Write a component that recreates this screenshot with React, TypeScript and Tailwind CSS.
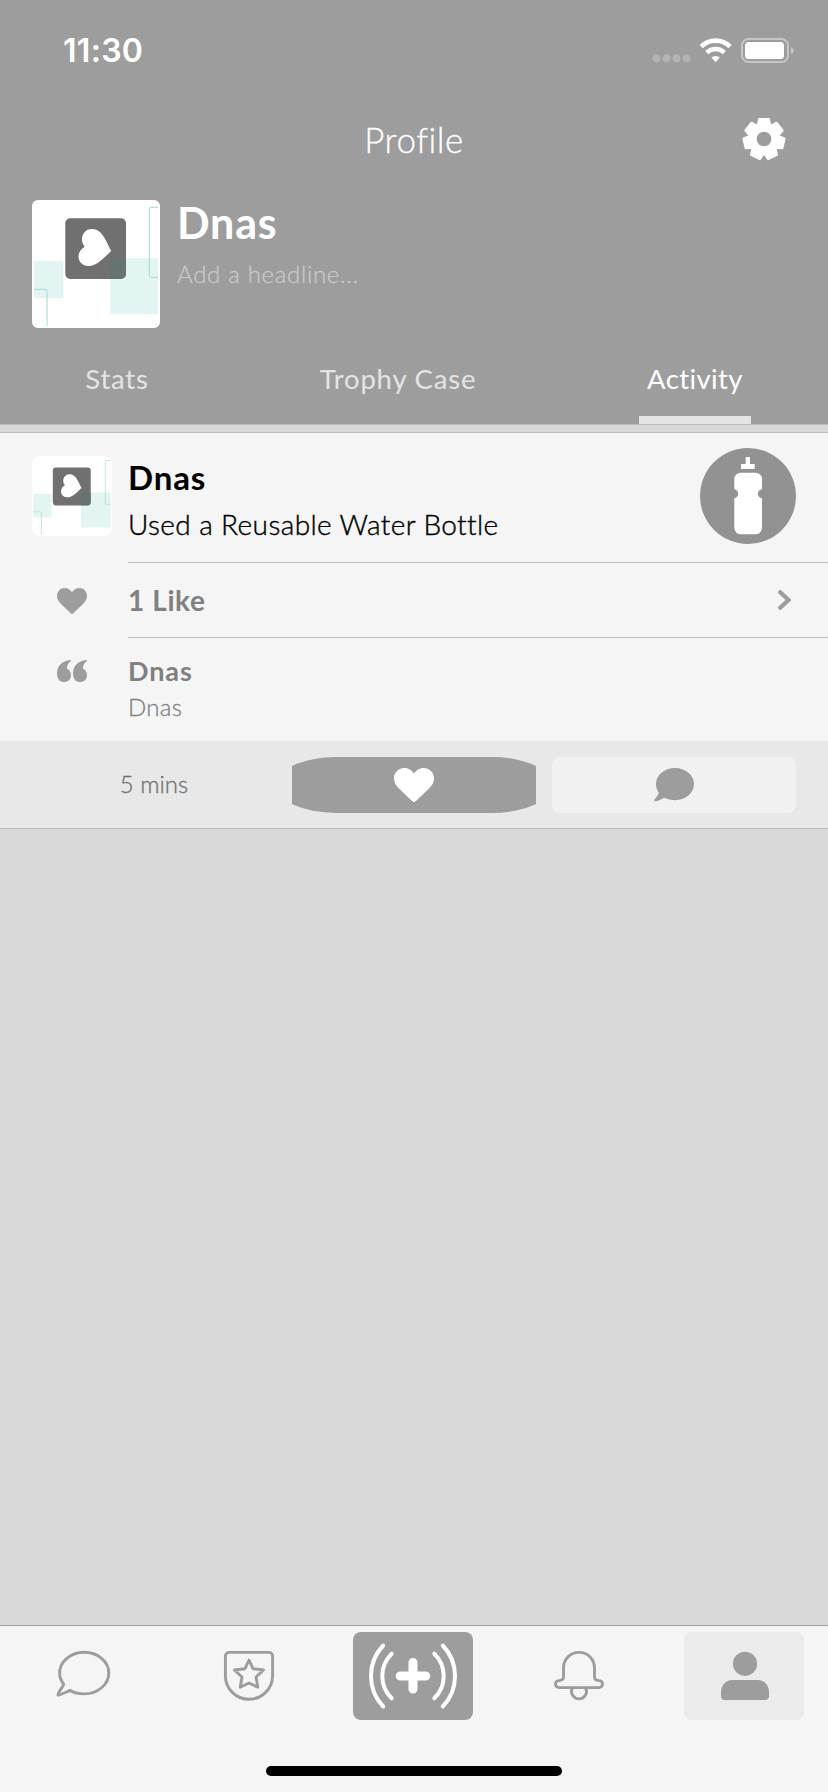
import type { ReactNode } from "react";

function Gear() {
  const teeth = [0, 1, 2, 3, 4, 5, 6];
  return (
    <svg width="44" height="44" viewBox="-22 -22 44 44">
      <g fill="#fff" stroke="#fff" strokeWidth="2.4" strokeLinejoin="round">
        {teeth.map((i) => (
          <path
            key={i}
            d="M-4.8 -19.8h9.6l1 5.5h-11.6z"
            transform={`rotate(${(i * 360) / 7})`}
          />
        ))}
      </g>
      <circle r="16.2" fill="#fff" />
      <circle r="7.3" fill="#9d9d9d" />
    </svg>
  );
}

function Avatar({ className }: { className: string }) {
  return (
    <svg viewBox="0 0 128 128" className={className}>
      <rect width="128" height="128" fill="#fff" />
      <rect x="33.3" y="18.3" width="60.7" height="60.7" rx="5" fill="#707070" />
      <rect x="2" y="60.7" width="29.3" height="37.6" fill="#e3f5f2" />
      <path d="M94 58.3H126V114.3H78.3V79H89a5 5 0 0 0 5-5z" fill="#e3f5f2" />
      <path d="M78.3 58.3H94V74a5 5 0 0 1-5 5H78.3z" fill="#667370" />
      <path
        d="M52.7 46.7C47 40 50.5 29 60 29C70 29 73.5 40 79.3 51C72 57.5 65 66 56.7 66C45.5 66 42.5 52.5 52.7 46.7Z"
        fill="#fff"
      />
      <path
        d="M126 7.3h-6.7a2 2 0 0 0-2 2v66a2 2 0 0 0 2 2h6.7M2 89.3h11a2 2 0 0 1 2 2V126"
        fill="none"
        stroke="#9fdccf"
        strokeWidth="1"
      />
    </svg>
  );
}

function Heart({ className }: { className: string }) {
  return (
    <svg viewBox="0 0 40 34" preserveAspectRatio="none" className={className}>
      <path
        fill="currentColor"
        d="M20 34C19.2 34 18.4 33.2 17.5 32.4L5 20.5C2 17.5 0 14.5 0 10.5C0 4.5 4.6 0 10.3 0C14.6 0 18 2.3 20 5.6C22 2.3 25.4 0 29.7 0C35.4 0 40 4.5 40 10.5C40 14.5 38 17.5 35 20.5L22.5 32.4C21.6 33.2 20.8 34 20 34Z"
      />
    </svg>
  );
}

function Bottle() {
  return (
    <svg width="96" height="96" viewBox="0 0 96 96">
      <circle cx="48" cy="48" r="48" fill="#929292" />
      <path d="M45.7 9H50v7h4.7v5H41v-5h4.7z" fill="#fff" />
      <rect x="34.3" y="24.7" width="27.7" height="61.6" rx="6.5" fill="#fff" />
      <circle cx="33.7" cy="45.7" r="4.5" fill="#929292" />
      <circle cx="62.4" cy="45.7" r="4.5" fill="#929292" />
    </svg>
  );
}

function Quote() {
  return (
    <svg width="30" height="22" viewBox="0 0 30 22" fill="#9d9d9d">
      <path d="M14 0C7 .3 0 4.5 0 13.2C0 18.6 3 22 7 22C11 22 14 19 14 15.4C14 11.8 12.4 9.6 9.8 8.8C10 5 11.5 2.3 14 .9Z" />
      <path
        transform="translate(16)"
        d="M14 0C7 .3 0 4.5 0 13.2C0 18.6 3 22 7 22C11 22 14 19 14 15.4C14 11.8 12.4 9.6 9.8 8.8C10 5 11.5 2.3 14 .9Z"
      />
    </svg>
  );
}

function StatusBar() {
  return (
    <div className="flex h-[99px] items-center justify-between pl-[63px] pr-[34px]">
      <span className="pt-0.5 font-[Inter,sans-serif] text-[32px] font-semibold leading-none tracking-[0.3px]">
        11:30
      </span>
      <svg width="142" height="26" viewBox="652 36 142 26">
        <g fill="#b4b4b4">
          <circle cx="656.5" cy="57.3" r="3.9" />
          <circle cx="666.5" cy="57.3" r="3.9" />
          <circle cx="676.5" cy="57.3" r="3.9" />
          <circle cx="686.7" cy="57.3" r="3.9" />
        </g>
        <g fill="none" stroke="#fff" strokeWidth="4.6">
          <path d="M701.2 45.6a20.3 20.3 0 0 1 28.8 0" />
          <path d="M706.8 51.7a12.4 12.4 0 0 1 17.6 0" />
        </g>
        <path d="M711.4 56.6a6 6 0 0 1 8.4 0L715.6 61.2z" fill="#fff" />
        <rect x="742" y="38" width="46" height="23" rx="6.5" fill="none" stroke="#c6c6c6" strokeWidth="2" />
        <rect x="745" y="41" width="39" height="17" rx="3.5" fill="#fff" />
        <path d="M791 46q2.8 1.2 2.8 3.6t-2.8 3.6z" fill="#c6c6c6" />
      </svg>
    </div>
  );
}

function Header() {
  return (
    <header className="h-[424px] bg-[#9d9d9d] text-white">
      <StatusBar />
      <div className="grid h-20 grid-cols-3 items-center px-[42px]">
        <span />
        <h1 className="text-center text-[35px] font-light leading-none tracking-[0.5px] [-webkit-text-stroke:0.3px]">
          Profile
        </h1>
        <button className="justify-self-end">
          <Gear />
        </button>
      </div>
      <div className="flex gap-[17px] px-8 pt-[21px]">
        <Avatar className="size-32 rounded-[6px]" />
        <div className="pt-px">
          <h2 className="text-[43px] font-bold leading-[43px] tracking-[0.8px]">Dnas</h2>
          <p className="mt-[14px] text-2xl font-light leading-8 tracking-[0.68px] text-[#c9c9c9] [-webkit-text-stroke:0.3px]">
            Add a headline...
          </p>
        </div>
      </div>
      <nav className="flex h-24 justify-between px-[77px] text-[27.5px] leading-[102px] tracking-[0.8px] text-[#e4e4e4]">
        <button className="w-20 text-center">Stats</button>
        <button className="w-[172px] text-center">Trophy Case</button>
        <button className="w-28 border-b-8 border-[#e4e4e4] text-center tracking-[0.4px] text-white">Activity</button>
      </nav>
    </header>
  );
}

function ActivityCard() {
  return (
    <article className="border-y border-[#bdbdbd] bg-[#f5f5f5]">
      <div className="flex">
        <div className="w-32 pl-8 pt-[23px]">
          <Avatar className="size-20 rounded-lg" />
        </div>
        <div className="flex h-[130px] flex-1 justify-between border-b border-[#bdbdbd] pr-8 text-black">
          <div className="pt-6">
            <h3 className="text-[33px] font-bold leading-10 tracking-[0.9px]">Dnas</h3>
            <p className="mt-[7px] text-[28px] font-light leading-10 tracking-[0.4px] [-webkit-text-stroke:0.4px]">
              Used a Reusable Water Bottle
            </p>
          </div>
          <div className="pt-[15px]">
            <Bottle />
          </div>
        </div>
      </div>
      <div className="flex">
        <div className="flex w-32 items-center pl-[57px]">
          <Heart className="h-[26px] w-[30px] text-[#9d9d9d]" />
        </div>
        <div className="flex h-[75px] flex-1 items-center justify-between border-b border-[#bdbdbd] pr-[36px]">
          <span className="text-[28px] font-bold leading-none tracking-[0.6px] text-[#808080]">1 Like</span>
          <svg width="14" height="20" viewBox="0 0 14 20">
            <path d="M2.2 2.2L10.5 10L2.2 17.8" fill="none" stroke="#9d9d9d" strokeWidth="4.2" strokeLinecap="round" />
          </svg>
        </div>
      </div>
      <div className="flex h-[103px] text-[#808080]">
        <div className="w-32 pl-[57px] pt-[22px]">
          <Quote />
        </div>
        <div className="pt-[15px]">
          <h4 className="text-[27px] font-bold leading-9 tracking-[0.9px]">Dnas</h4>
          <p className="text-2xl font-light leading-9 tracking-[0.3px] [-webkit-text-stroke:0.3px]">Dnas</p>
        </div>
      </div>
      <footer className="grid h-[87px] grid-cols-3 gap-4 bg-[#e8e8e8] px-8 pt-4">
        <span className="text-center text-2xl font-light leading-[53px] text-[#707070] [-webkit-text-stroke:0.3px]">
          5 mins
        </span>
        <button className="relative h-14 overflow-hidden">
          <span className="absolute -inset-x-4 inset-y-0 rounded-[60px/28px] bg-[#9d9d9d]" />
          <Heart className="relative mx-auto h-[34px] w-10 text-white" />
        </button>
        <button className="h-14 rounded-lg bg-[#f1f1f1]">
          <svg width="40" height="34" viewBox="0 0 40 34" className="mx-auto -mt-px">
            <path
              d="M21 0C31.5 0 40 7 40 16S31.5 32.2 21 32.2C17 32.2 13.5 31.5 10.5 29.8C7 31 4 33.5 1 33.3C0 33.2 0 32 .6 31.2C3 29 4 27 4.8 24.8C3 22.3 2 19.5 2 16C2 7 10.5 0 21 0Z"
              fill="#9d9d9d"
            />
          </svg>
        </button>
      </footer>
    </article>
  );
}

function Tab({ className = "", children }: { className?: string; children: ReactNode }) {
  return (
    <button className={`h-[88px] w-[120px] rounded-lg ${className}`}>
      <svg
        width="120"
        height="88"
        viewBox="0 0 120 88"
        fill="none"
        stroke="#9d9d9d"
        strokeWidth="2.9"
        strokeLinecap="round"
        strokeLinejoin="round"
      >
        {children}
      </svg>
    </button>
  );
}

function TabBar() {
  return (
    <nav className="flex h-[167px] flex-col items-center justify-between border-t border-[#9d9d9d] bg-[#f5f5f5] pb-4 pt-1.5">
      <div className="flex w-full gap-[45px] pl-[23px]">
        <Tab>
          <path d="M47 58.3C51 61 56 61.9 61.2 61.9C74.8 61.9 85.8 52.5 85.8 41S74.8 20.3 61.2 20.3S36.6 29.6 36.6 41C36.6 45 38.2 49 40.6 52C40.6 54.5 34.6 60.5 35 63C38.5 63 43 60 47 58.3Z" />
        </Tab>
        <Tab>
          <path d="M41 20.4H81a3.6 3.6 0 0 1 3.6 3.6V43.7a23.6 23.6 0 0 1-47.2 0V24a3.6 3.6 0 0 1 3.6-3.6Z" />
          <path d="M61 28L65 36.7L75.6 38L68 45L69.8 55.2L61 51L52.2 55.2L54 45L46.4 38L57 36.7Z" />
        </Tab>
        <Tab className="bg-[#9d9d9d]">
          <g stroke="#fff" strokeWidth="4">
            <path d="M30.2 13.5a44.2 44.2 0 0 0 0 61M38.7 21.7a31.1 31.1 0 0 0 0 44.6M89.8 13.5a44.2 44.2 0 0 1 0 61M81.3 21.7a31.1 31.1 0 0 1 0 44.6" />
            <path d="M47.2 44H72.8M60 30.5V57" strokeWidth="9" />
          </g>
        </Tab>
        <Tab>
          <path d="M41 55.6H81a3.5 3.5 0 0 0 0-7C78.5 48.4 76.5 47.5 76.5 45V36C76.5 27.5 70 20.4 61 20.4S45.5 27.5 45.5 36V45C45.5 47.5 43.5 48.4 41 48.6a3.5 3.5 0 0 0 0 7Z" />
          <path d="M54.3 56a7.5 7.5 0 1 0 13.4 0" />
        </Tab>
        <Tab className="ml-px bg-[#ebebeb]">
          <g fill="#9d9d9d" stroke="none">
            <circle cx="61" cy="31.8" r="12.1" />
            <path d="M48 48H74C80 48 85 53.5 85 60V64a4 4 0 0 1-4 4H41a4 4 0 0 1-4-4V60C37 53.5 42 48 48 48Z" />
          </g>
        </Tab>
      </div>
      <div className="h-2.5 w-[296px] rounded-full bg-black" />
    </nav>
  );
}

export default function App() {
  return (
    <div className="flex h-[1792px] w-[828px] flex-col overflow-hidden bg-[#d9d9d9] font-[Lato,sans-serif]">
      <Header />
      <main className="flex-1 border-t border-[#bdbdbd] pt-[7px]">
        <ActivityCard />
      </main>
      <TabBar />
    </div>
  );
}
